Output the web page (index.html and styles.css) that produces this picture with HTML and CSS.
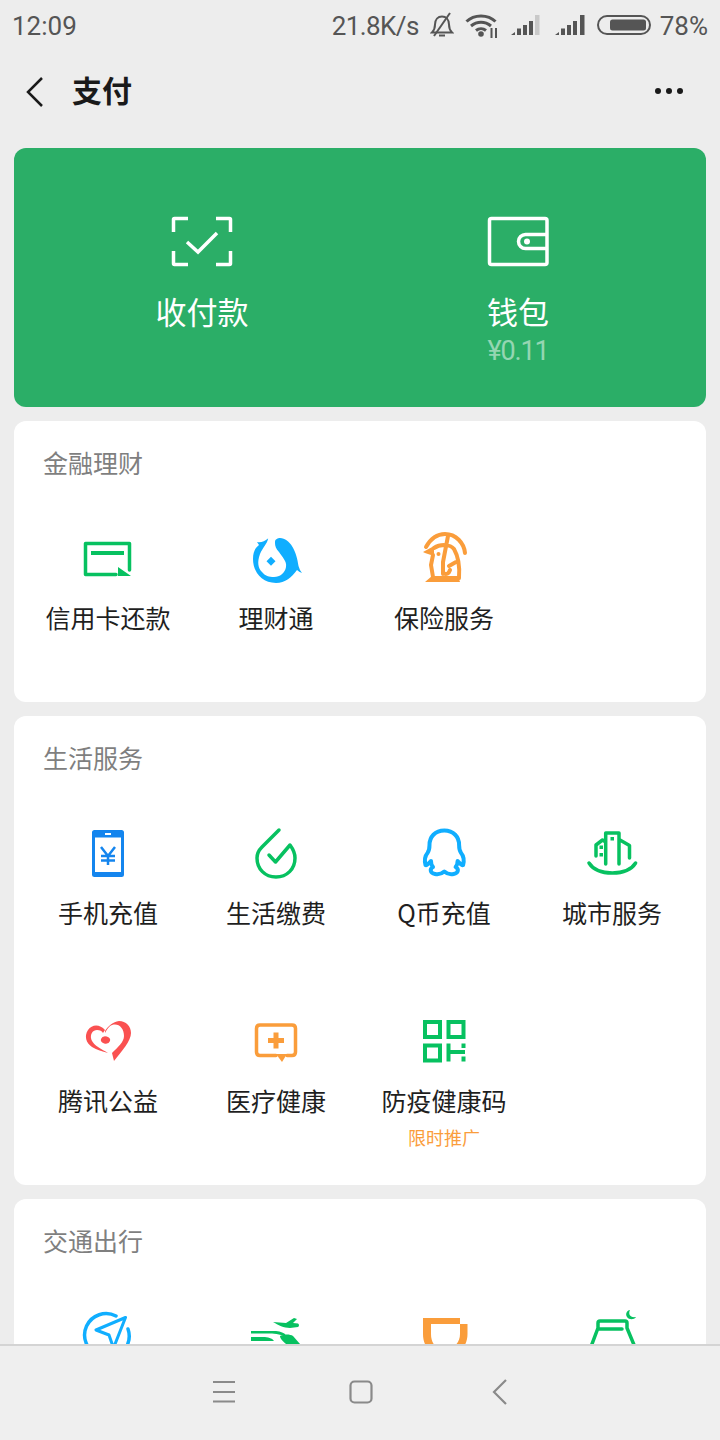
FILE: index.html
```html
<!DOCTYPE html>
<html lang="zh">
<head>
<meta charset="utf-8">
<title>支付</title>
<link rel="stylesheet" href="styles.css">
</head>
<body>
<div class="screen">
  <div class="status">
    <span class="time">12:09</span>
    <div class="status-right">
      <span class="speed">21.8K/s</span>
      <svg class="ic-bell" width="24" height="26" viewBox="0 0 24 26"><path class="st" d="M2 20.500c2-2 3-4 3-8 0-5 3-8 7-8s7 3 7 8c0 4 1 6 3 8z"/><path class="st" d="M9 23.500h6"/><path class="st" d="M4 24L20 1"/></svg>
      <svg class="ic-wifi" width="33" height="25" viewBox="0 0 33 25"><path class="st-w" d="M1.500 8.500C9 1 23 1 30.500 8.500"/><path class="st-w" d="M6 13c6-5 14-5 20 0"/><path class="st-w" d="M11 17.500c3-2.500 7-2.500 10 0"/><circle class="fl" cx="16" cy="21" r="2.800"/><path class="st" d="M26.500 15v10M31 15v10"/></svg>
      <svg class="ic-sig" width="30" height="22" viewBox="0 0 30 22"><path class="fl" d="M0 21l4-3v3zM6 14.500h4V21H6zM12 11h4v10h-4zM18 7h4v14h-4z"/><path class="fl-l" d="M24 1h4.500v20H24z"/></svg>
      <svg class="ic-sig2" width="31" height="22" viewBox="0 0 31 22"><path class="fl" d="M0 21l4-3v3zM6 14.500h4V21H6zM12 11h4v10h-4zM18 7h4v14h-4zM25 1h4.500v20H25z"/></svg>
      <svg class="ic-bat" width="54" height="20" viewBox="0 0 54 20"><rect class="st" x="1" y="1" width="52" height="18" rx="9"/><rect class="fl" x="13" y="4.500" width="36" height="11" rx="2.500"/></svg>
      <span class="pct">78%</span>
    </div>
  </div>

  <div class="toolbar">
    <svg class="back" width="20" height="32" viewBox="0 0 20 32"><path d="M17 2L3 16l14 14"/></svg>
    <span class="page-title">支付</span>
    <svg class="more" width="32" height="8" viewBox="0 0 32 8"><circle cx="5" cy="4" r="3"/><circle cx="16" cy="4" r="3"/><circle cx="27" cy="4" r="3"/></svg>
  </div>

  <main class="content">
    <section class="hero">
      <div class="hero-item">
        <svg class="hero-icon" width="64" height="56" viewBox="0 0 64 56"><path d="M3.500 19V6.500q0-1 1-1H18M46 5.500h13.500q1 0 1 1V19M3.500 38v12.500q0 1 1 1H18M46 51.500h13.500q1 0 1-1V38M17 29l11 10 19-19"/></svg>
        <div class="hero-label">收付款</div>
      </div>
      <div class="hero-item">
        <svg class="hero-icon" width="64" height="56" viewBox="0 0 64 56"><path d="M5.500 5.500h53.500q2 0 2 2v42q0 2-2 2H5.500q-2 0-2-2v-42q0-2 2-2zM61 21.500H39.500a7 7 0 0 0 0 14H61"/><circle class="hero-dot" cx="41" cy="28.500" r="3"/></svg>
        <div class="hero-label">钱包</div>
        <div class="hero-sub">¥0.11</div>
      </div>
    </section>

    <section class="card">
      <h2 class="card-title">金融理财</h2>
      <div class="grid">
        <div class="item">
          <svg class="icon" width="56" height="56" viewBox="0 0 56 56"><path class="s-green s-thick" d="M36 44.500H5.500v-31h44V40"/><path class="f-green" d="M11 21h33v4H11zM38 37l13 9H38z"/></svg>
          <div class="label">信用卡还款</div>
        </div>
        <div class="item">
          <svg class="icon" width="56" height="56" viewBox="0 0 56 56"><path class="f-blue" d="M9 12q6 1 11-3.500L27 12c0-3 3-4 5-4 10 0 17 14 18.500 28q1 4 3.500 7-3-1-5-3c-5 7-12 13-21 13C14 53 5 42 5 29c0-7 2-11 6-14z"/><path class="f-white" d="M22 3L20 9c-1 5-5 8-8 15-3 8-2 14 2 18 3 4 7 5 12 5 6 0 11-4 12-10 1-6-4-10-7-15-3-3-4-6-4-9V3z"/><path class="f-blue" d="M23 26.800l4.500 4.500-4.500 4.500-4.500-4.500z"/></svg>
          <div class="label">理财通</div>
        </div>
        <div class="item">
          <svg class="icon" width="56" height="56" viewBox="0 0 56 56"><path class="s-orange s-heavy" d="M10 17C15 8 22 4 29 4c11 0 19 9 20 19"/><path class="f-orange" d="M7 22l11-6v10l-9-3zM9 52l7-6h26l2 6z"/></svg>
          <svg class="icon-over" width="56" height="56" viewBox="0 0 56 56"><path class="s-orange s-heavy" d="M18 18c6-4 16-4 20 1 4 7 6 17 5 29M17 25l-2 10 2 12M32 6l-5 26v12M27 43q5 3 7-3M33 36l7-4"/><circle class="f-orange" cx="22.500" cy="24" r="2"/></svg>
          <div class="label">保险服务</div>
        </div>
      </div>
    </section>

    <section class="card">
      <h2 class="card-title">生活服务</h2>
      <div class="grid">
        <div class="item">
          <svg class="icon" width="56" height="56" viewBox="0 0 56 56"><path class="f-phone" fill-rule="evenodd" d="M14.500 5h27q2.500 0 2.500 2.500v42q0 2.500-2.500 2.500h-27q-2.500 0-2.500-2.500v-42Q12 5 14.500 5zM15 12.500V47h26V12.500zM25 8v2h6V8z"/><path class="s-phone" d="M21 22l7 9 7-9M28 31v9M21 31h14M21 35.500h14"/></svg>
          <div class="label">手机充值</div>
        </div>
        <div class="item">
          <svg class="icon" width="56" height="56" viewBox="0 0 56 56"><path class="s-green s-thick" d="M31 5L14 22c-3.500 3.500-5 7-5 11 0 11 8 19 19 19s19-8 19-19c0-5-2-9-5-13L27.500 37 21 30"/></svg>
          <div class="label">生活缴费</div>
        </div>
        <div class="item">
          <svg class="icon" width="56" height="56" viewBox="0 0 56 56"><path class="s-blue s-heavy" d="M28.300 5.500C19 5.500 13.500 12 13.500 20c0 4-.5 6-2 8-2.500 3-3 8-2 12 1.500 1 3.500-2 5.500-4 0 3 1 5 2 6-3.500 2-3 6 2 7 4 1 7-.5 9.300-2.500 2.300 2 5.300 3.500 9.300 2.500 5-1 5.500-5 2-7 1-1 2-3 2-6 2 2 4 5 5.500 4 1-4 .5-9-2-12-1.500-2-2-4-2-8 0-8-5.500-14.500-14.800-14.500z"/></svg>
          <div class="label">Q币充值</div>
        </div>
        <div class="item">
          <svg class="icon" width="56" height="56" viewBox="0 0 56 56"><path class="s-green s-thick" d="M5 38c5 8 14 10 23.300 10s18.300-2 23.300-10"/><path class="s-green s-thick" d="M12 31V20l6.500-5 3.200 2M21.700 39V8H35v31M36 15l9.500 5.500V33"/><path class="f-green" d="M26.500 12h3.500v3.500h-3.500zM15.500 20.500H19V24h-3.500zM15.500 28H19v3.500h-3.500z"/></svg>
          <div class="label">城市服务</div>
        </div>
        <div class="item">
          <svg class="icon" width="56" height="56" viewBox="0 0 56 56"><path class="f-red" d="M25 17c-5-6-13-6-17 0-4 6-2 13 4 17 5 3 10 4 16 6-6-4-14-7-16.500-13C9.500 21 13 17 17 17c3 0 5 1 6 3zM25 18c3-5 8-9 14-10 7 0 12 5 12 12 0 8-9 18-17 28l-2-8c6-6 12-11 12-17 0-7-4-11.500-9-11.500-4 0-7 2.500-10 8.500z"/><path class="f-red" d="M21 26a4.500 3.500 0 1 1 9 2 4.500 3.500 0 0 1-9-2z"/></svg>
          <div class="label">腾讯公益</div>
        </div>
        <div class="item">
          <svg class="icon" width="56" height="56" viewBox="0 0 56 56"><path class="s-orange s-thick" d="M28 42.500H12q-3.500 0-3.500-3.500V15.500q0-3.500 3.500-3.500h32q3.500 0 3.500 3.500V39q0 3.500-3.500 3.500h-5"/><path class="f-orange" d="M28 41h11l-5 8zM25.500 19.500h5v5.500H36v5h-5.500v5.500h-5V30H20v-5h5.500z"/></svg>
          <div class="label">医疗健康</div>
        </div>
        <div class="item">
          <svg class="icon" width="56" height="56" viewBox="0 0 56 56"><path class="s-qr" d="M9 9h15v15H9zM32.500 9h15v15h-15zM9 32.500h15v15H9zM32.500 30.500v18M32.500 39H49M47.500 30.500V35M47.500 43.500v5"/></svg>
          <div class="label">防疫健康码</div>
          <div class="sub">限时推广</div>
        </div>
      </div>
    </section>

    <section class="card">
      <h2 class="card-title">交通出行</h2>
      <div class="grid">
        <div class="item">
          <svg class="icon" width="56" height="56" viewBox="0 0 56 56"><path class="s-blue s-thick" d="M36 8A21.500 21.500 0 1 0 18 47M48 21a21.500 21.500 0 0 1-10 26"/><path class="s-blue" d="M45.500 9.500L16 22l13 5 4.500 13z"/></svg>
        </div>
        <div class="item">
          <svg class="icon" width="56" height="56" viewBox="0 0 56 56"><path class="f-green" d="M25 14l13 1 8-5 3 1-4 4 5 .5q2 1.500 0 3.500l-8 1c-6 0-12-3-17-6zM3 23h25c5 .5 8 2 10 4h-5c-3-1-6-1.500-9-1.500H3zM3 29h12c5 0 9 1 11 4H3zM32 28c4-2 10-2 13 0l7 8H38c-3-3-6-5-6-8z"/></svg>
        </div>
        <div class="item">
          <svg class="icon" width="56" height="56" viewBox="0 0 56 56"><path class="f-orange" fill-rule="evenodd" d="M7 10h37v6h7.500v10c0 9-4.500 16-11.500 20H18C11 42 7 35 7 26zM15 16v10c0 7 3 12 7 14h13c5-2 9-7 9-14V16z"/></svg>
        </div>
        <div class="item">
          <svg class="icon" width="56" height="56" viewBox="0 0 56 56"><path class="s-green s-thick" d="M5 44l9-24v-5q0-2 2-2h25q2 0 2 2v5l10 24zM15 21h23"/><path class="f-green" d="M46 2c-2 4 0 8 6 7-2 3-7 3-9 0-2-3 0-7 3-7z"/></svg>
        </div>
      </div>
    </section>
  </main>

  <nav class="navbar">
    <svg class="nav-icon" width="24" height="24" viewBox="0 0 24 24"><path d="M1 2h22M1 12h22M1 21.500h22"/></svg>
    <svg class="nav-icon" width="24" height="24" viewBox="0 0 24 24"><rect x="1.500" y="1.500" width="21" height="21" rx="4"/></svg>
    <svg class="nav-icon nav-back" width="24" height="26" viewBox="0 0 24 26"><path d="M17 1L5 13l12 12"/></svg>
  </nav>
</div>
</body>
</html>
```
FILE: styles.css
```css
* { box-sizing: border-box; }
html, body { margin: 0; padding: 0; }
body { background: #ededed; font-family: "Noto Sans CJK SC", "Noto Sans", sans-serif; }
.screen { width: 720px; height: 1440px; display: flex; flex-direction: column; overflow: hidden; background: #ededed; }

.status { height: 48px; flex: none; display: flex; align-items: center; justify-content: space-between; padding: 2px 12px 0 12px; color: #555; font-family: Roboto, sans-serif; font-size: 26px; }
.status-right { display: flex; align-items: center; }
.time, .speed, .pct { margin-top: 2px; }
.speed { margin-right: 11px; letter-spacing: -0.6px; }
.ic-wifi { margin-left: 11px; }
.ic-sig { margin-left: 13px; }
.ic-sig2 { margin-left: 14px; }
.ic-bat { margin-left: 11px; }
.pct { margin-left: 9px; }
.st { fill: none; stroke: #555; stroke-width: 2; }
.st-w { fill: none; stroke: #555; stroke-width: 3; }
.fl { fill: #555; }
.fl-l { fill: #c9c9c9; }

.toolbar { height: 88px; flex: none; display: flex; align-items: center; padding: 0 35px 0 25px; }
.back { fill: none; stroke: #1a1a1a; stroke-width: 2.500; margin-right: 27px; }
.page-title { font-size: 30px; font-weight: 700; color: #1a1a1a; flex: 1; line-height: 44px; margin-bottom: 6px; }
.more { fill: #1a1a1a; margin-bottom: 2px; }

.content { flex: 1; min-height: 0; overflow: hidden; padding: 12px 14px 0; display: flex; flex-direction: column; gap: 14px; }
.hero { flex: none; height: 259px; background: #2bae67; border-radius: 12px; padding: 65px 30px 0; display: grid; grid-template-columns: 1fr 1fr; }
.hero-item { display: flex; flex-direction: column; align-items: center; color: #fff; }
.hero-icon { fill: none; stroke: #fff; stroke-width: 3.500; flex: none; }
.hero-dot { fill: #fff; stroke: none; }
.hero-label { font-size: 31px; line-height: 42px; margin-top: 21px; margin-bottom: 2px; }
.hero-sub { font-family: Roboto, sans-serif; font-size: 27px; letter-spacing: -1.2px; line-height: 34px; color: rgba(255,255,255,.5); }

.card { flex: none; background: #fff; border-radius: 12px; padding: 0 10px 7px; }
.card-title { margin: 0; height: 86px; padding: 24px 0 0 19px; font-size: 25px; line-height: 34px; font-weight: 400; color: #7f7f7f; }
.grid { display: grid; grid-template-columns: repeat(4, 168px); grid-auto-rows: 188px; }
.item { position: relative; display: flex; flex-direction: column; align-items: center; padding-top: 23px; }
.icon { flex: none; }
.icon-over { position: absolute; top: 23px; left: 56px; }
.label { margin-top: 14px; margin-bottom: 2px; font-size: 25px; line-height: 34px; color: #1f1f1f; white-space: nowrap; }
.sub { margin-top: 7px; font-size: 18px; line-height: 22px; color: #fa9d3b; }

.s-green, .s-blue, .s-orange, .s-phone { fill: none; stroke-width: 3; stroke-linecap: round; stroke-linejoin: round; }
.s-green { stroke: #07c160; }
.s-blue { stroke: #10aeff; }
.s-orange { stroke: #fa9d3b; }
.s-phone { stroke: #1485ee; stroke-width: 2.500; stroke-linecap: butt; }
.s-thick { stroke-width: 3.500; }
.s-heavy { stroke-width: 4; }
.s-qr { fill: none; stroke: #07c160; stroke-width: 4; }
.f-green { fill: #07c160; }
.f-blue { fill: #10aeff; }
.f-orange { fill: #fa9d3b; }
.f-red { fill: #fa5151; }
.f-phone { fill: #1485ee; }
.f-white { fill: #fff; }

.navbar { height: 96px; flex: none; background: #efefef; border-top: 2px solid #d4d4d4; display: flex; align-items: center; justify-content: center; gap: 113px; padding-bottom: 3px; padding-left: 4px; }
.nav-icon { fill: none; stroke: #8a8a8a; stroke-width: 2.200; }
.nav-back { margin-left: 3px; }
```
